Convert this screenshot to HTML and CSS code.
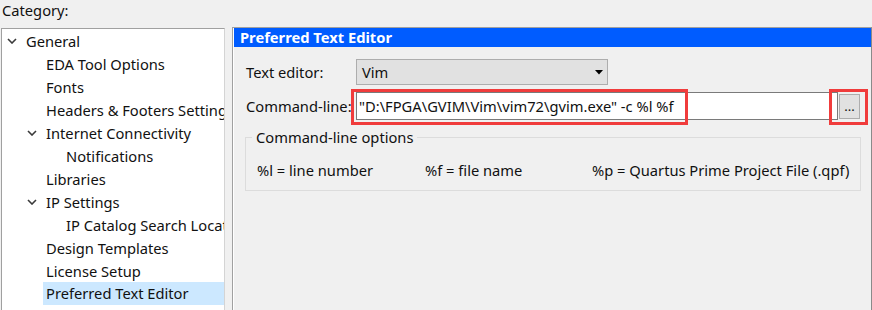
FILE: index.html
```html
<!DOCTYPE html>
<html>
<head>
<meta charset="utf-8">
<link rel="stylesheet" href="styles.css">
</head>
<body>
<div class="label-category">Category:</div>
<div class="main">
  <div class="tree">
    <div class="row l0"><span class="chev"><svg width="10" height="6" viewBox="0 0 10 6"><path d="M1 1 L5 5 L9 1" fill="none" stroke="#3a3a3a" stroke-width="1.6"/></svg></span><span class="txt">General</span></div>
    <div class="row l1"><span class="txt">EDA Tool Options</span></div>
    <div class="row l1"><span class="txt">Fonts</span></div>
    <div class="row l1"><span class="txt">Headers &amp; Footers Settings</span></div>
    <div class="row l1c"><span class="chev"><svg width="10" height="6" viewBox="0 0 10 6"><path d="M1 1 L5 5 L9 1" fill="none" stroke="#3a3a3a" stroke-width="1.6"/></svg></span><span class="txt">Internet Connectivity</span></div>
    <div class="row l2"><span class="txt">Notifications</span></div>
    <div class="row l1"><span class="txt">Libraries</span></div>
    <div class="row l1c"><span class="chev"><svg width="10" height="6" viewBox="0 0 10 6"><path d="M1 1 L5 5 L9 1" fill="none" stroke="#3a3a3a" stroke-width="1.6"/></svg></span><span class="txt">IP Settings</span></div>
    <div class="row l2"><span class="txt">IP Catalog Search Locations</span></div>
    <div class="row l1"><span class="txt">Design Templates</span></div>
    <div class="row l1"><span class="txt">License Setup</span></div>
    <div class="row l1 sel"><span class="txt">Preferred Text Editor</span></div>
  </div>
  <div class="panel">
    <div class="titlebar">Preferred Text Editor</div>
    <div class="content">
      <div class="formrow r1">
        <span class="flabel">Text editor:</span>
        <div class="combo"><span>Vim</span><svg class="arrow" width="8" height="5" viewBox="0 0 8 5"><path d="M0 0 H8 L4 4.5 Z" fill="#000"/></svg></div>
      </div>
      <div class="formrow r2">
        <span class="flabel">Command-line:</span>
        <div class="input">"D:\FPGA\GVIM\Vim\vim72\gvim.exe" -c %l %f</div>
        <div class="browse">...</div>
        <div class="redbox rb1"></div>
        <div class="redbox rb2"></div>
      </div>
      <fieldset class="group">
        <legend>Command-line options</legend>
        <div class="opts">
          <span>%l = line number</span>
          <span>%f = file name</span>
          <span>%p = Quartus Prime Project File (.qpf)</span>
        </div>
      </fieldset>
    </div>
  </div>
</div>
</body>
</html>
```
FILE: styles.css
```css
html, body {
  margin: 0;
  padding: 0;
  background: #f0f0f0;
  width: 872px;
  height: 310px;
  overflow: hidden;
  font-family: "Noto Sans", "Open Sans", sans-serif;
  font-size: 14.7px;
  color: #111;
}
.label-category {
  height: 27px;
  line-height: 20px;
  padding-left: 2px;
}
.main {
  display: flex;
  align-items: flex-start;
  height: 283px;
}
.tree {
  margin-left: 1px;
  margin-top: 1px;
  width: 222px;
  height: 290px;
  background: #fff;
  border-top: 1px solid #a0a0a0;
  border-left: 1px solid #a0a0a0;
  border-right: 1px solid #d4d4d4;
  padding-top: 0;
  overflow: hidden;
}
.row {
  height: 23px;
  display: flex;
  align-items: center;
  white-space: nowrap;
}
.row .chev {
  width: 10px;
  height: 6px;
  display: flex;
  margin-right: 7px;
}
.row.l0 { padding-left: 5px; }
.row.l1 { padding-left: 42px; }
.row.l1c { padding-left: 25px; }
.row.l2 { padding-left: 62px; }
.row .txt { padding-left: 2px; padding-right: 2px; }
.row.sel { padding-left: 41px; }
.row.sel .txt {
  background: #cce8ff;
  height: 23px;
  line-height: 23px;
  flex: 1;
  padding-left: 3px;
}
.panel {
  margin-left: 7px;
  flex: 1;
  height: 290px;
  border: 1px solid #a0a0a0;
  border-bottom: none;
  border-right-color: #8a8a8a;
  box-shadow: inset 1px 0 0 #fff;
}
.titlebar {
  margin-left: 1px;
  height: 19px;
  line-height: 19px;
  background: #005cff;
  color: #fff;
  font-weight: bold;
  padding-left: 6px;
}
.content {
  padding: 12px 10px 0 13px;
}
.formrow {
  display: flex;
  align-items: center;
  position: relative;
}
.flabel {
  width: 110px;
  flex: none;
}
.combo {
  width: 241px;
  height: 24px;
  border: 1px solid #adadad;
  background: #e1e1e1;
  display: flex;
  align-items: center;
  justify-content: space-between;
  padding: 0 4px 0 5px;
}
.r1 { height: 26px; }
.r2 {
  margin-top: 7px;
  height: 28px;
}
.input {
  width: 478px;
  height: 26px;
  line-height: 26px;
  border: 1px solid #7a7a7a;
  background: #fff;
  padding-left: 2px;
  white-space: nowrap;
  overflow: hidden;
}
.browse {
  margin-left: 1px;
  width: 19px;
  height: 23px;
  border: 1px solid #adadad;
  background: #e1e1e1;
  text-align: center;
  line-height: 22px;
  font-size: 13px;
}
.redbox {
  position: absolute;
  border: 3px solid #f03c3c;
  pointer-events: none;
}
.rb1 { left: 105px; top: -3px; width: 331px; height: 30px; }
.rb2 { left: 583px; top: -3px; width: 33px; height: 30px; }
.group {
  margin: 9px 0 0 -1px;
  width: 616px;
  height: 62px;
  border: 1px solid #dcdcdc;
  padding: 0;
  box-sizing: border-box;
  min-width: 0;
}
.group legend {
  margin-left: 6px;
  padding: 0 4px;
  line-height: 17px;
}
.opts {
  display: grid;
  grid-template-columns: 168px 167px auto;
  padding: 14px 0 0 11px;
}
```
